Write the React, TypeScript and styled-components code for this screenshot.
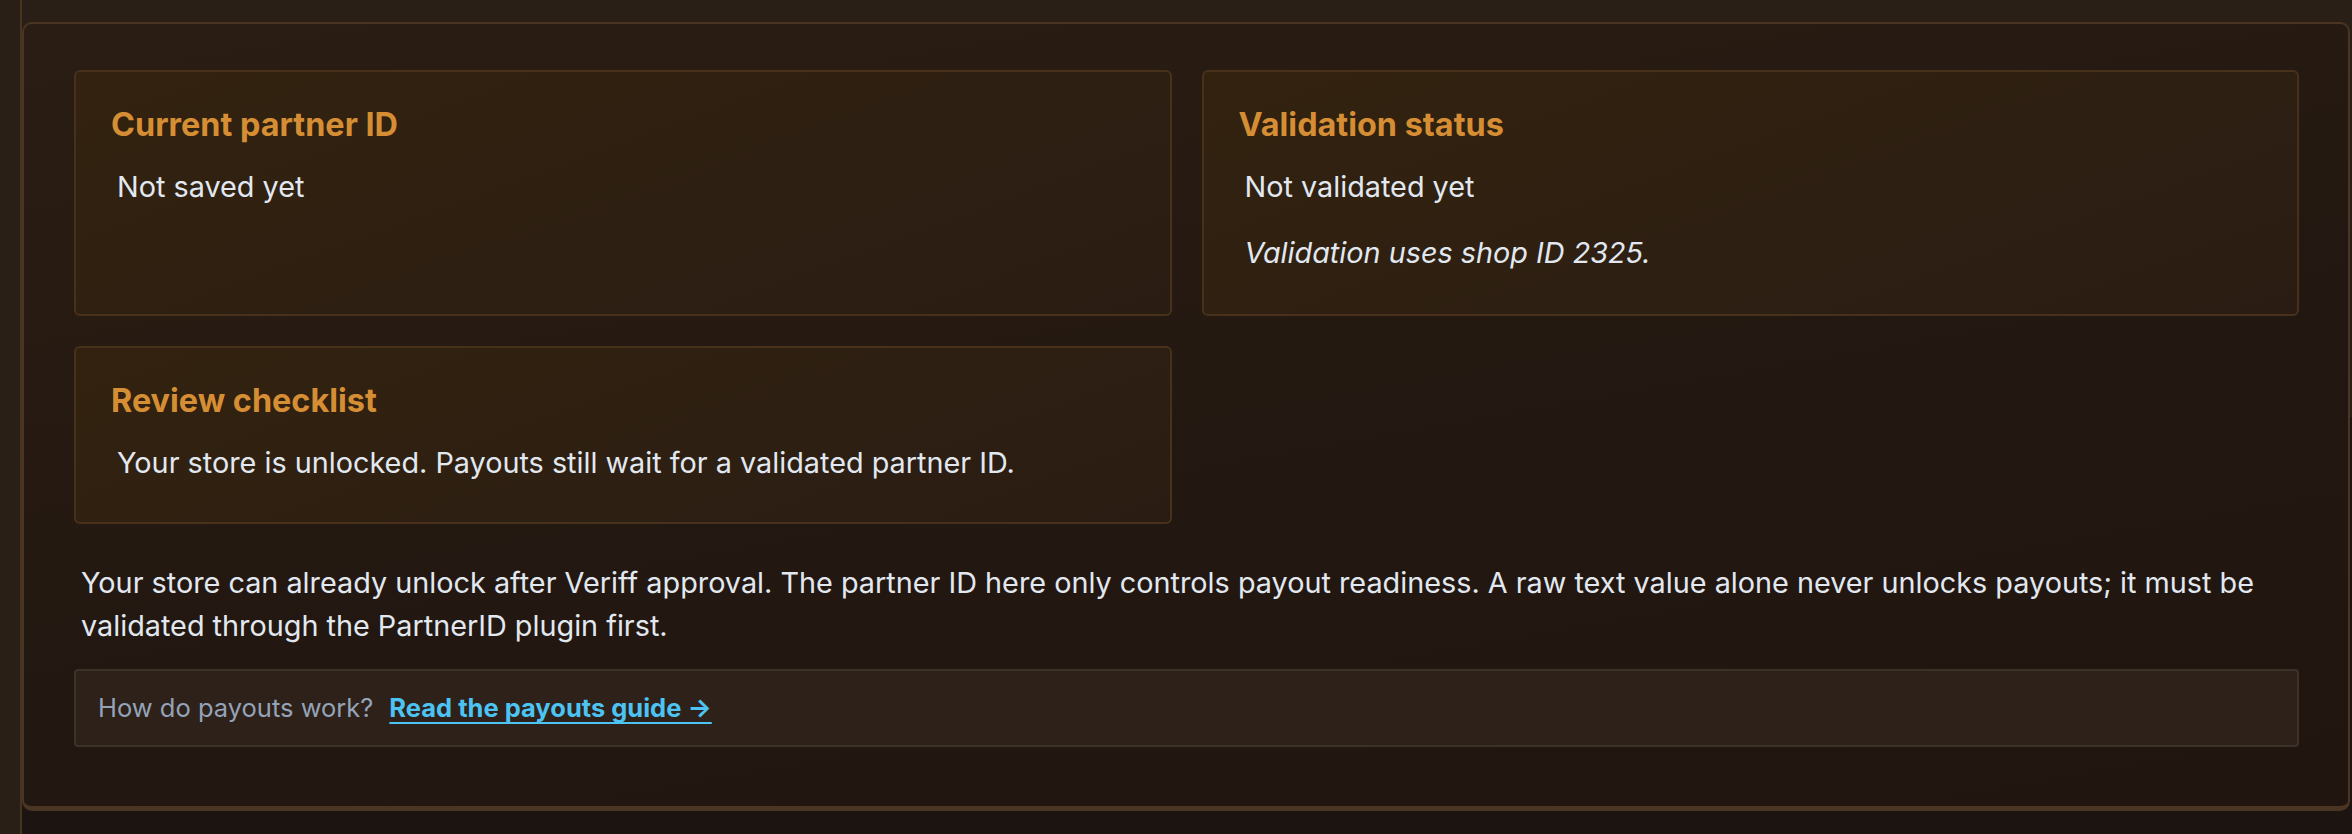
import styled, { createGlobalStyle } from "styled-components";

const GlobalStyle = createGlobalStyle`
  * {
    box-sizing: border-box;
  }
  body {
    margin: 0;
    background: #1b1411;
    font-family: Inter, "Noto Sans", "Liberation Sans", sans-serif;
    color: #e2e8f0;
  }
`;

const Page = styled.div`
  display: flex;
  min-height: 834px;
`;

const SideStrip = styled.div`
  width: 22px;
  flex-shrink: 0;
  background: #2a1f17;
  border-right: 2px solid #46341f;
`;

const Main = styled.main`
  flex: 1;
  padding: 22px 2px 24px 0;
  background: linear-gradient(180deg, #2a1f17 0, #2a1f17 50%, #1b1411 50%);
`;

const Panel = styled.section`
  border: 2px solid #4a3522;
  border-bottom-width: 5px;
  border-radius: 10px;
  padding: 46px 49px 59px 50px;
  background: linear-gradient(170deg, #2a1d13 0%, #231811 55%, #20160f 100%);
`;

const CardGrid = styled.div`
  display: grid;
  grid-template-columns: 1fr 1fr;
  gap: 30px;
`;

const Card = styled.div`
  border: 2px solid #47311b;
  border-radius: 6px;
  padding: 34px 36px 38px 35px;
  background: linear-gradient(160deg, #33220f 0%, #2d1f12 60%, #2a1c12 100%);
`;

const CardTitle = styled.h3`
  margin: 0 0 20px;
  font-size: 32.4px;
  line-height: 1.2;
  font-weight: 700;
  color: #d68e34;
`;

const CardText = styled.p<{ $italic?: boolean }>`
  margin: 0;
  padding-left: 6px;
  font-size: 28.8px;
  line-height: 1.5;
  color: #e2e8f0;
  font-style: ${(p) => (p.$italic ? "italic" : "normal")};

  & + & {
    margin-top: 23px;
    margin-bottom: 1.5px;
  }
`;

const Note = styled.p`
  margin: 37px 0 22px;
  padding-left: 7px;
  font-size: 28.8px;
  line-height: 1.5;
  color: #e2e8f0;
`;

const GuideBox = styled.div`
  border: 2px solid #3e3128;
  border-radius: 4px;
  padding: 18px 22px;
  background: #2d2119;
  font-size: 25.5px;
  line-height: 1.5;
  color: #94a3b8;
`;

const GuideLink = styled.a`
  margin-left: 16px;
  color: #4cc3f2;
  font-weight: 700;
  text-decoration: underline;
  text-underline-offset: 5px;
  text-decoration-thickness: 2px;
  cursor: pointer;
`;

export default function App() {
  return (
    <>
      <GlobalStyle />
      <Page>
        <SideStrip />
        <Main>
          <Panel>
            <CardGrid>
              <Card>
                <CardTitle>Current partner ID</CardTitle>
                <CardText>Not saved yet</CardText>
              </Card>
              <Card>
                <CardTitle>Validation status</CardTitle>
                <CardText>Not validated yet</CardText>
                <CardText $italic>Validation uses shop ID 2325.</CardText>
              </Card>
              <Card>
                <CardTitle>Review checklist</CardTitle>
                <CardText>
                  Your store is unlocked. Payouts still wait for a validated
                  partner ID.
                </CardText>
              </Card>
            </CardGrid>
            <Note>
              Your store can already unlock after Veriff approval. The partner
              ID here only controls payout readiness. A raw text value alone
              never unlocks payouts; it must be validated through the PartnerID
              plugin first.
            </Note>
            <GuideBox>
              How do payouts work?
              <GuideLink>Read the payouts guide →</GuideLink>
            </GuideBox>
          </Panel>
        </Main>
      </Page>
    </>
  );
}
